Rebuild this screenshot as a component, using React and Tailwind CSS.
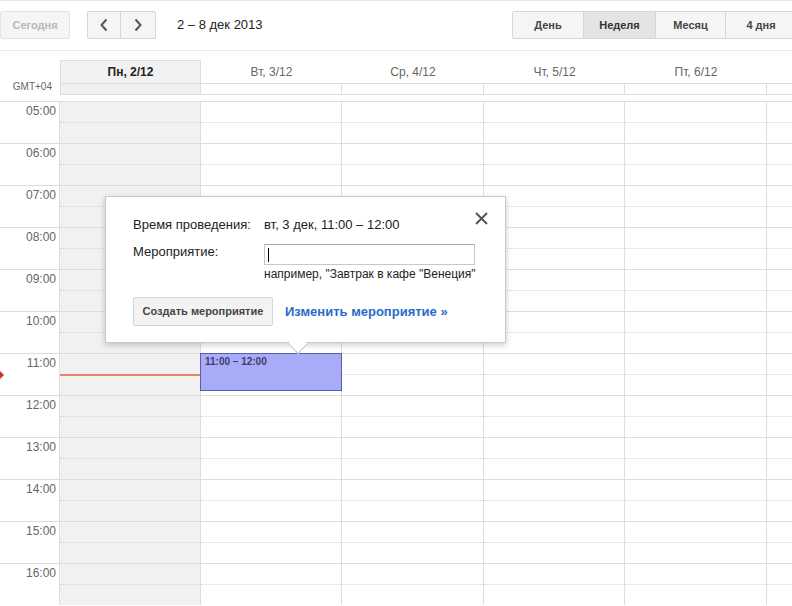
import React from "react";

const days = [
  { label: "Пн, 2/12", w: "w-[141px]", today: true },
  { label: "Вт, 3/12", w: "w-[141px]" },
  { label: "Ср, 4/12", w: "w-[142px]" },
  { label: "Чт, 5/12", w: "w-[141px]" },
  { label: "Пт, 6/12", w: "w-[142px]" },
];

const hours = ["05:00", "06:00", "07:00", "08:00", "09:00", "10:00", "11:00", "12:00", "13:00", "14:00", "15:00", "16:00"];

const DayCell = ({ day, children }) => (
  <div className={`${day.w} shrink-0 relative border-r border-[#dddddd] ${day.today ? "bg-[#f1f1f1]" : "bg-white"}`}>
    <div className="h-[21px] border-b border-dotted border-[#d4d4d4]" />
    {children}
  </div>
);

const App = () => {
  return (
    <div className="w-[792px] h-[606px] overflow-hidden bg-white relative text-[#222]" style={{ fontFamily: '"Liberation Sans", Arial, sans-serif' }}>
      {/* toolbar */}
      <div className="h-[51px] border-t border-[#e8e8e8] border-b border-b-[#ebebeb] flex items-start pt-[10px]">
        <button className="w-[70px] h-[28px] bg-[#f5f5f5] border border-[#e2e2e2] rounded-[2px] text-[11px] font-bold text-[#b8b8b8]">Сегодня</button>
        <div className="ml-[17px] flex h-[28px] border border-[#d6d6d6] rounded-[2px] bg-[#f5f5f5]">
          <button className="w-[33px] flex items-center justify-center border-r border-[#d6d6d6]">
            <svg width="10" height="14" viewBox="0 0 10 14"><path d="M7.5 1.5 L2.5 7 L7.5 12.5" fill="none" stroke="#555" strokeWidth="2" /></svg>
          </button>
          <button className="w-[34px] flex items-center justify-center">
            <svg width="10" height="14" viewBox="0 0 10 14"><path d="M2.5 1.5 L7.5 7 L2.5 12.5" fill="none" stroke="#555" strokeWidth="2" /></svg>
          </button>
        </div>
        <div className="ml-[21px] h-[28px] flex items-center text-[13px] text-[#222]">2 – 8 дек 2013</div>
        <div className="ml-auto flex h-[28px] border border-[#d6d6d6] rounded-l-[2px] bg-[#f5f5f5] text-[11px] font-bold text-[#444] shrink-0 -mr-[5px]">
          <button className="w-[71px] border-r border-[#d6d6d6]">День</button>
          <button className="w-[72px] border-r border-[#d6d6d6] bg-[#e4e4e4] text-[#333]">Неделя</button>
          <button className="w-[70px] border-r border-[#d6d6d6]">Месяц</button>
          <button className="w-[70px]">4 дня</button>
        </div>
      </div>

      {/* day header */}
      <div className="flex pt-[9px]">
        <div className="w-[60px] shrink-0 flex flex-col justify-end items-end pr-[8px] pb-[1px]">
          <span className="text-[10px] text-[#666]">GMT+04</span>
        </div>
        <div className="flex flex-col">
          <div className="flex h-[23px]">
            {days.map((d) => (
              <div
                key={d.label}
                className={`${d.w} shrink-0 flex items-center justify-center text-[12px] ${d.today ? "bg-[#f1f1f1] border-t border-l border-r border-[#dddddd] font-bold text-[#222]" : "text-[#666]"}`}
              >
                {d.label}
              </div>
            ))}
          </div>
          <div className="flex h-[12px] border-t border-b border-[#dddddd] w-[732px]">
            {days.map((d) => (
              <div key={d.label} className={`${d.w} shrink-0 border-r border-[#dddddd] ${d.today ? "bg-[#f1f1f1] border-l" : ""}`} />
            ))}
          </div>
        </div>
      </div>

      {/* grid */}
      <div className="mt-[6px] relative">
        {hours.map((h) => (
          <div key={h} className="flex h-[42px] border-t border-[#dddddd]">
            <div className="w-[60px] shrink-0 border-r border-[#dddddd] text-right pr-[3px] text-[12px] text-[#666]">{h}</div>
            {days.map((d, i) => (
              <DayCell key={d.label} day={d}>
                {h === "11:00" && i === 1 && (
                  <div className="absolute -left-px top-[-1px] w-[142px] h-[38px] bg-[#a8acf8] border border-[#5a5eaa] px-[4px] text-[10px] font-bold text-[#3a3d6e]">
                    11:00 – 12:00
                  </div>
                )}
                {h === "11:00" && i === 0 && (
                  <div className="absolute left-0 top-[20px] w-full h-[2px] bg-[#e3856b]" />
                )}
              </DayCell>
            ))}
            <div className="flex-1 bg-white">
              <div className="h-[21px] border-b border-dotted border-[#d4d4d4]" />
            </div>
          </div>
        ))}
        {/* current time marker */}
        <svg className="absolute left-0 top-[270px]" width="5" height="8" viewBox="0 0 5 8">
          <path d="M0 0 L4 4 L0 8 Z" fill="#c0392b" />
        </svg>

        {/* popup */}
        <div className="absolute left-[105px] top-[95px] w-[401px] h-[147px] bg-white border border-[#c8c8c8] shadow-[0_2px_6px_rgba(0,0,0,0.2)] text-[13px] text-[#222]">
          <button className="absolute right-[17px] top-[15px]">
            <svg width="13" height="13" viewBox="0 0 13 13"><path d="M1 1 L12 12 M12 1 L1 12" stroke="#555" strokeWidth="2" /></svg>
          </button>
          <div className="pl-[27px] pt-[20px]">
            <div className="flex h-[16px] items-center">
              <div className="w-[131px]">Время проведения:</div>
              <div>вт, 3 дек, 11:00 – 12:00</div>
            </div>
            <div className="flex mt-[11px]">
              <div className="w-[131px] leading-[15px]">Мероприятие:</div>
              <div>
                <div className="w-[211px] h-[21px] border border-[#c8c8c8] border-t-[#a8a8a8] flex items-center pl-[3px]">
                  <div className="w-px h-[14px] bg-[#000]" />
                </div>
                <div className="text-[12px] leading-[14px] mt-[2px] text-[#222]">например, "Завтрак в кафе "Венеция"</div>
              </div>
            </div>
            <div className="flex items-center mt-[16px]">
              <button className="w-[140px] h-[29px] bg-[#f3f3f3] border border-[#d6d6d6] rounded-[2px] text-[11px] font-bold text-[#444]">Создать мероприятие</button>
              <a className="ml-[12px] text-[13px] font-bold text-[#2a6acb] cursor-pointer">Изменить мероприятие »</a>
            </div>
          </div>
          {/* arrow */}
          <div className="absolute left-[185px] -bottom-[9px] w-[14px] h-[14px] bg-white border-r border-b border-[#c8c8c8] rotate-45" />
        </div>
      </div>
    </div>
  );
};

export default App;
